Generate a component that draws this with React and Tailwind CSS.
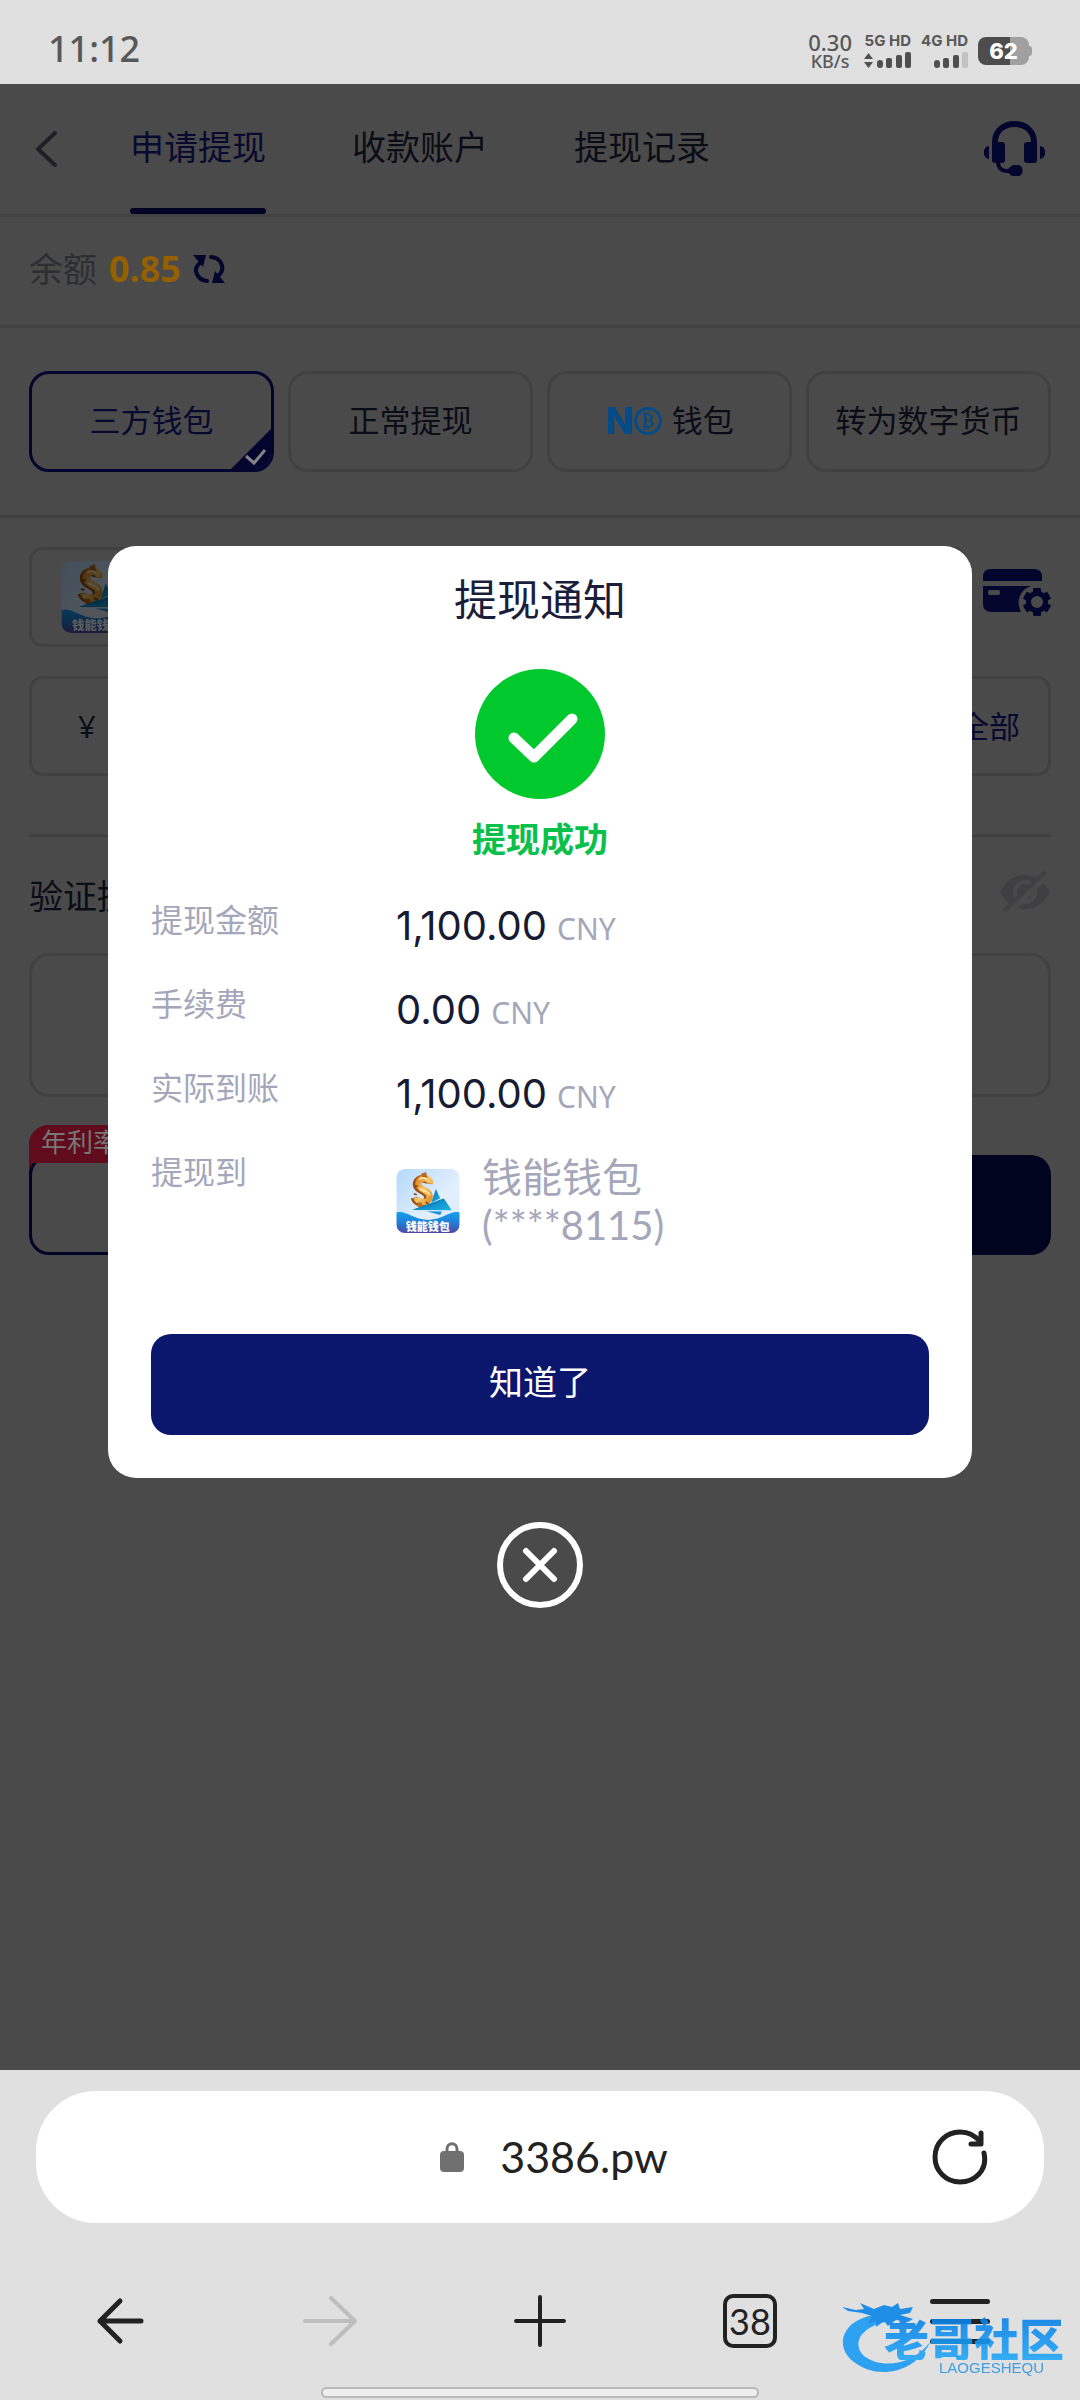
import React from "react";

const CJK = "font-['Noto_Sans','Noto_Sans_CJK_SC',sans-serif]";

function WalletLogo({ className, id }) {
  return (
    <svg viewBox="0 0 189 191" className={className} aria-hidden="true">
      <defs>
        <linearGradient id={id + "-sky"} x1="0" y1="0" x2="1" y2="1">
          <stop offset="0" stopColor="#b4d8fb" />
          <stop offset="0.6" stopColor="#e3effd" />
          <stop offset="1" stopColor="#dbe8fb" />
        </linearGradient>
        <linearGradient id={id + "-sea"} x1="0" y1="0" x2="0" y2="1">
          <stop offset="0" stopColor="#12a0ec" />
          <stop offset="0.55" stopColor="#2379d4" />
          <stop offset="1" stopColor="#5447a4" />
        </linearGradient>
        <linearGradient id={id + "-sail"} x1="0" y1="0" x2="1" y2="1">
          <stop offset="0" stopColor="#0a6fb4" />
          <stop offset="1" stopColor="#1cb2e6" />
        </linearGradient>
        <linearGradient id={id + "-gold"} x1="0" y1="0" x2="1" y2="1">
          <stop offset="0" stopColor="#d98324" />
          <stop offset="0.5" stopColor="#f8c867" />
          <stop offset="1" stopColor="#e0912c" />
        </linearGradient>
        <clipPath id={id + "-clip"}>
          <rect width="189" height="191" rx="26" />
        </clipPath>
      </defs>
      <g clipPath={`url(#${id}-clip)`}>
        <rect width="189" height="191" fill={`url(#${id}-sky)`} />
        <path d="M118 60 L131 88 L104 100 Z" fill={`url(#${id}-sail)`} />
        <path
          d="M96 44 C98 26 60 22 60 46 C60 66 96 62 94 86 C92 108 58 104 54 86"
          fill="none"
          stroke="#9c4d0c"
          strokeWidth="22"
        />
        <path
          d="M100 44 C104 24 66 20 66 44 C66 64 102 61 99 85 C96 105 64 102 60 86"
          fill="none"
          stroke={`url(#${id}-gold)`}
          strokeWidth="19"
        />
        <path d="M76 24 L74 14 L89 9 L92 26 Z M62 100 h14 v14 h-12 z" fill="#b8691b" />
        <path d="M68 32 C74 26 84 26 92 31 M70 58 C84 66 96 66 100 78" fill="none" stroke="#ffe9b5" strokeWidth="5" />
        <path d="M52 74 l9 3 M88 98 l7 6 M56 52 l8 -2" stroke="#8a430a" strokeWidth="5" />
        <path d="M47 122 L142 88 L165 123 Z" fill={`url(#${id}-sail)`} />
        <path d="M90 126 L136 127 L131 137 Z" fill="#1593d4" />
        <path d="M47 122 L142 88 L104 112 Z" fill="#0c86c4" />
        <path d="M0 130 C30 122 45 150 95 152 C145 150 160 122 189 130 V191 H0 Z" fill={`url(#${id}-sea)`} />
      </g>
      <text
        x="94"
        y="184"
        textAnchor="middle"
        fontSize="33"
        fontWeight="900"
        fill="#fff"
        fontFamily="'Noto Sans CJK SC', sans-serif"
      >
        钱能钱包
      </text>
    </svg>
  );
}

function Bars({ light }) {
  return (
    <svg width="34" height="16" viewBox="0 0 34 16" fill="#4f4f4f" aria-hidden="true">
      <rect x="0" y="8" width="6" height="8" rx="3" />
      <rect x="9" y="6" width="6" height="10" rx="2" />
      <rect x="19" y="3" width="6" height="13" rx="2" />
      <rect x="28" y="0" width="6" height="16" rx="2" fill={light ? "#c2c2c2" : "#4f4f4f"} />
    </svg>
  );
}

function StatusBar() {
  return (
    <header className="flex h-[84px] shrink-0 items-center justify-between bg-[#e0e0e0] pl-12 pr-12 pt-[18px] font-['Inter',sans-serif] text-[#585858]">
      <span className="pb-1 font-['Noto_Sans',sans-serif] text-[36px] leading-none font-medium">11:12</span>
      <div className="flex items-center">
        <div className="flex flex-col items-center font-['Noto_Sans',sans-serif] font-medium">
          <span className="text-[22px] leading-5">0.30</span>
          <span className="text-[18px] leading-[18px]">KB/s</span>
        </div>
        <div className="ml-3 flex flex-col items-end gap-1">
          <span className="text-[15px] leading-[14px] font-bold">5G HD</span>
          <div className="flex items-center gap-1">
            <svg width="9" height="15" viewBox="0 0 9 15" fill="#4f4f4f" aria-hidden="true">
              <path d="M4.500 0 L9 6 H0 Z M0 9 H9 L4.500 15 Z" />
            </svg>
            <Bars />
          </div>
        </div>
        <div className="ml-2.5 flex flex-col items-end gap-1">
          <span className="text-[15px] leading-[14px] font-bold">4G HD</span>
          <Bars light />
        </div>
        <div className="ml-2.5 flex items-center">
          <div className="flex h-7 w-[51px] items-center justify-center rounded-lg bg-linear-to-r from-[#4d4d4d] from-62% to-[#a0a0a0] to-62% text-[22px] leading-none font-extrabold text-white">
            62
          </div>
          <div className="h-2.5 w-[3px] rounded-r-sm bg-[#a0a0a0]" />
        </div>
      </div>
    </header>
  );
}

function HeadsetIcon() {
  return (
    <svg width="61" height="56" viewBox="0 0 61 56" fill="#02062c" aria-hidden="true">
      <path d="M11 24 V21 C11 -3 50 -3 50 21 V24" fill="none" stroke="#02062c" strokeWidth="6" />
      <rect x="8" y="21" width="13" height="21" rx="3" />
      <rect x="40" y="21" width="13" height="21" rx="3" />
      <path d="M5 25 C-2 26 -2 37 5 38 Z M56 25 C63 26 63 37 56 38 Z" />
      <path d="M14 40 C14 48 18 50 24 50 H30" fill="none" stroke="#02062c" strokeWidth="4" />
      <path d="M29 44 H34 C40 44 40 55 34 55 H29 C25 55 23 49 25 47 Z" />
    </svg>
  );
}

function CardGearIcon() {
  const teeth = [0, 60, 120, 180, 240, 300];
  return (
    <svg width="68" height="48" viewBox="0 0 68 48" fill="#03062c" aria-hidden="true">
      <path d="M0 12 V8 Q0 0 8 0 H51 Q59 0 59 8 V12 Z" />
      <path d="M0 17 H48 C36 21 33 33 38 43 H9 Q0 43 0 35 Z" />
      <rect x="5" y="21" width="12" height="5" rx="2" fill="#4a4a4a" />
      <circle cx="54" cy="33" r="8.500" fill="none" stroke="#03062c" strokeWidth="5" />
      {teeth.map((a) => (
        <rect key={a} x="50" y="19" width="8" height="6" rx="1" transform={`rotate(${a} 54 33)`} />
      ))}
    </svg>
  );
}

function TopNav() {
  return (
    <nav className="flex h-[133px] items-stretch border-b-[3px] border-[#424242] pl-[29px] pr-[35px] text-[34px] text-[#0a0c16]">
      <button type="button" aria-label="返回" className="flex w-[101px] items-center pl-1">
        <svg width="24" height="36" viewBox="0 0 24 36" fill="none" stroke="#202024" strokeWidth="4" strokeLinecap="round" strokeLinejoin="round">
          <path d="M22 2 L5 18 L22 34" />
        </svg>
      </button>
      <div className="flex gap-[86px]">
        <button type="button" className="relative pb-1 text-[#08092e]">
          申请提现
          <span className="absolute inset-x-0 bottom-0 h-1.5 rounded-full bg-[#020425]" />
        </button>
        <button type="button" className="pb-1">收款账户</button>
        <button type="button" className="pb-1">提现记录</button>
      </div>
      <button type="button" aria-label="客服" className="ml-auto flex items-center">
        <HeadsetIcon />
      </button>
    </nav>
  );
}

function Balance() {
  return (
    <section className="flex h-[111px] items-center border-b-[3px] border-[#424242] px-[29px] pb-1 text-[34px]">
      <span className="text-[#2d2e32]">余额</span>
      <strong className="ml-3 text-[36px] text-[#946000]">0.85</strong>
      <button type="button" aria-label="刷新余额" className="ml-3">
        <svg width="32" height="30" viewBox="0 0 32 30" aria-hidden="true">
          <path d="M7 9 C-1 15 4 26 14 27 M18 3 C29 4 33 15 25 22" fill="none" stroke="#03062c" strokeWidth="4" strokeLinecap="round" />
          <path d="M0 1 H13 L10 13 Z M32 29 H19 L22 17 Z" fill="#03062c" />
        </svg>
      </button>
    </section>
  );
}

function WalletTabs() {
  const plain = "flex h-[101px] items-center justify-center rounded-[20px] border-[3px] border-[#414141] pb-0.5";
  return (
    <section className="grid grid-cols-4 gap-3.5 border-b-[3px] border-[#414141] px-[29px] py-[43px] text-[31px] whitespace-nowrap text-[#0a0c16]">
      <button type="button" className="relative flex h-[101px] items-center justify-center overflow-hidden rounded-[20px] border-[3px] border-[#03052e] pb-0.5 text-[#08092e]">
        三方钱包
        <svg width="44" height="44" viewBox="0 0 44 44" className="absolute right-[-2px] bottom-[-2px]" aria-hidden="true">
          <path d="M44 0 V44 H0 Z" fill="#03052e" />
          <path d="M17 29 L25 36 L36 23" fill="none" stroke="#848488" strokeWidth="3" />
        </svg>
      </button>
      <button type="button" className={plain}>正常提现</button>
      <button type="button" className={plain}>
        <span className="font-['Inter',sans-serif] text-[37px] leading-none font-extrabold text-[#044b87]">N</span>
        <span className="mr-2.5 flex h-7 w-7 items-center justify-center rounded-full border-[3px] border-[#044b87] font-['Liberation_Serif',serif] text-[19px] leading-none font-bold text-[#044b87]">
          ₿
        </span>
        钱包
      </button>
      <button type="button" className={plain}>转为数字货币</button>
    </section>
  );
}

function WithdrawForm() {
  return (
    <section className="px-[29px] pt-[29px] text-[31px] text-[#0a0c16]">
      <div className="flex items-start gap-4">
        <button type="button" aria-label="钱能钱包" className="flex h-[100px] flex-1 items-center rounded-[14px] border-[3px] border-[#414141] px-[29px]">
          <WalletLogo id="field" className="h-[72px] w-[72px] [filter:brightness(0.36)]" />
        </button>
        <button type="button" aria-label="管理账户" className="mt-[22px]">
          <CardGearIcon />
        </button>
      </div>
      <div className="mt-[29px] flex h-[100px] items-center rounded-[14px] border-[3px] border-[#414141] pr-7 pl-[46px]">
        <label htmlFor="amount" className="w-9">¥</label>
        <input id="amount" type="text" inputMode="decimal" className="min-w-0 flex-1 bg-transparent outline-none" />
        <button type="button" className="text-[#08092e]">全部</button>
      </div>
      <hr className="mt-[58px] border-t-[3px] border-[#414141]" />
      <div className="mt-[29px] flex h-[60px] items-center justify-between">
        <label htmlFor="password" className="text-[34px]">验证提</label>
        <button type="button" aria-label="显示密码">
          <svg width="52" height="42" viewBox="0 0 52 42" aria-hidden="true" className="-mt-2">
            <path d="M1 21 C12 -2 40 -2 51 21 C40 44 12 44 1 21 Z" fill="#404042" />
            <circle cx="26" cy="21" r="10" fill="none" stroke="#4a4a4a" strokeWidth="4" />
            <path d="M8 42 L49 2" stroke="#4a4a4a" strokeWidth="8" />
            <path d="M5 40 L46 1" stroke="#404042" strokeWidth="4" />
          </svg>
        </button>
      </div>
      <input id="password" type="password" className="mt-[27px] block h-[144px] w-full rounded-[20px] border-[3px] border-[#414141] bg-transparent px-8 outline-none" />
      <div className="mt-[58px] grid grid-cols-2 gap-3.5">
        <button type="button" aria-label="年利率" className="relative h-[100px] rounded-[20px] border-[3px] border-[#020425]">
          <span className="absolute top-[-33px] left-[-3px] -z-10 h-[60px] w-[140px] rounded-tl-[20px] bg-[#600c1c]" />
          <span className="absolute inset-0 -z-10 rounded-[16px] bg-[#4a4a4a]" />
          <span className="absolute top-[-33px] left-[-3px] h-[38px] w-[140px] rounded-tl-[20px] bg-[#600c1c] pl-3 text-left text-[26px] leading-[34px] text-[#777]">
            年利率
          </span>
        </button>
        <button type="button" aria-label="确认" className="h-[100px] rounded-[20px] bg-[#01041f]" />
      </div>
    </section>
  );
}

const rows = [
  { label: "提现金额", value: "1,100.00" },
  { label: "手续费", value: "0.00" },
  { label: "实际到账", value: "1,100.00" },
];

function Notice() {
  return (
    <div className="absolute inset-0 z-10 flex flex-col items-center justify-center">
      <div role="dialog" aria-labelledby="notice-title" className="w-4/5 rounded-[28px] bg-white px-[43px] pt-6 pb-[43px]">
        <h2 id="notice-title" className="text-center text-[43px] leading-[60px] text-[#1b1e3a]">提现通知</h2>
        <svg viewBox="0 0 130 130" className="mx-auto mt-[39px] h-[130px] w-[130px]" aria-hidden="true">
          <circle cx="65" cy="65" r="65" fill="#00c82d" />
          <path d="M39 69 L59 88 L97 50" fill="none" stroke="#fff" strokeWidth="11" strokeLinecap="round" strokeLinejoin="round" />
        </svg>
        <p className="mt-4 text-center text-[34px] leading-[48px] font-bold text-[#09c04a]">提现成功</p>
        <dl className="mt-[34px]">
          {rows.map((r) => (
            <div key={r.label} className="flex h-[84px] items-start">
              <dt className="w-[245px] text-[32px] leading-[46px] text-[#a4a7b9]">{r.label}</dt>
              <dd className="flex items-baseline gap-2.5 pt-0.5 leading-[54px]">
                <span className="font-['Inter',sans-serif] text-[40px] text-[#171a33]">{r.value}</span>
                <span className="text-[30px] text-[#a4a7b9]">CNY</span>
              </dd>
            </div>
          ))}
          <div className="flex items-start text-[#a4a7b9]">
            <dt className="w-[245px] text-[32px] leading-[46px]">提现到</dt>
            <dd className="flex items-center pt-1">
              <WalletLogo id="dialog" className="h-16 w-16" />
              <span className="ml-[22px] text-[40px] leading-[48px]">
                钱能钱包
                <br />
                <span className="font-['Lato',sans-serif]">(****8115)</span>
              </span>
            </dd>
          </div>
        </dl>
        <button type="button" className="mt-[85px] h-[101px] w-full rounded-[20px] bg-[#0b166d] pb-1 text-[34px] text-white">知道了</button>
      </div>
      <button type="button" aria-label="关闭" className="mt-11">
        <svg width="86" height="86" viewBox="0 0 86 86" fill="none" stroke="#fff" strokeWidth="6" strokeLinecap="round">
          <circle cx="43" cy="43" r="40" />
          <path d="M29 29 L57 57 M57 29 L29 57" />
        </svg>
      </button>
    </div>
  );
}

function Watermark() {
  return (
    <div className="pointer-events-none absolute right-4 bottom-6 flex flex-col items-end opacity-90" aria-hidden="true">
      <svg width="92" height="74" viewBox="0 0 92 74" className="absolute right-[130px] bottom-0">
        <path d="M38 12 C-2 16 -8 46 12 60 C34 78 74 72 88 40 C72 62 40 68 22 54 C8 40 22 24 44 20 Z" fill="#1b9bf3" />
        <path
          d="M0 5 L14 8 L22 7 L18 1 L32 7 L42 3 L50 5 L56 1 L58 7 L71 5 L68 11 L58 13 L71 17 L66 20 L54 18 L46 24 L42 19 L34 25 L34 19 L26 22 L30 14 L20 11 L6 9 Z"
          fill="#0b86e8"
        />
      </svg>
      <span className="relative bg-linear-to-b from-[#0a7fe6] to-[#23a8f8] bg-clip-text font-['Noto_Sans_CJK_SC',sans-serif] text-[45px] leading-[44px] font-black text-transparent">
        老哥社区
      </span>
      <span className="relative mr-5 font-['Liberation_Sans',sans-serif] text-[15px] leading-4 text-[#2f97e0]">LAOGESHEQU</span>
    </div>
  );
}

function BrowserBar() {
  return (
    <footer className="relative shrink-0 bg-[#e0e0e0] pt-[21px] font-['Lato',sans-serif] text-[#222]">
      <div className="relative mx-9 flex h-[132px] items-center justify-center rounded-[60px] bg-white">
        <svg width="24" height="30" viewBox="0 0 24 30" aria-hidden="true">
          <rect y="9" width="24" height="21" rx="4" fill="#707070" />
          <path d="M7 11 V7 C7 0 17 0 17 7 V11" fill="none" stroke="#707070" strokeWidth="3" />
        </svg>
        <span className="mr-[-28px] ml-9 text-[43px]">3386.pw</span>
        <button type="button" aria-label="刷新" className="absolute right-14">
          <svg width="56" height="56" viewBox="0 0 56 56" fill="none" stroke="#222" strokeWidth="5" strokeLinecap="round" strokeLinejoin="round">
            <path d="M52 24 C56 42 42 53 28 53 C14 53 3 42 3 28 C3 14 14 3 28 3 C36 3 43 6 48 13" />
            <path d="M49 4 V15 H39" />
          </svg>
        </button>
      </div>
      <div className="mt-[50px] grid h-24 grid-cols-5 place-items-center px-[15px]">
        <button type="button" aria-label="后退">
          <svg width="48" height="48" viewBox="0 0 48 48" fill="none" stroke="#222" strokeWidth="5" strokeLinecap="round" strokeLinejoin="round">
            <path d="M24 4 L4 24 L24 44 M4 24 H45" />
          </svg>
        </button>
        <button type="button" aria-label="前进">
          <svg width="54" height="50" viewBox="0 0 54 50" fill="none" stroke="#bebebe" strokeWidth="4" strokeLinecap="round" strokeLinejoin="round">
            <path d="M28 2 L52 25 L28 48 M52 25 H2" />
          </svg>
        </button>
        <button type="button" aria-label="新建">
          <svg width="52" height="52" viewBox="0 0 52 52" fill="none" stroke="#222" strokeWidth="4" strokeLinecap="round">
            <path d="M26 2 V50 M2 26 H50" />
          </svg>
        </button>
        <button type="button" aria-label="标签页" className="flex h-[54px] w-[54px] items-center justify-center rounded-[10px] border-4 border-[#222] text-[36px] leading-none">
          38
        </button>
        <button type="button" aria-label="菜单" className="flex w-[60px] flex-col gap-[15px]">
          <span className="h-[5px] rounded-full bg-[#222]" />
          <span className="h-[5px] rounded-full bg-[#222]" />
          <span className="h-[5px] rounded-full bg-[#222]" />
        </button>
      </div>
      <div className="mx-auto mt-[18px] mb-0.5 h-[11px] w-[40.5%] rounded-full border-2 border-[#bababa] bg-[#eee]" />
      <Watermark />
    </footer>
  );
}

export default function App() {
  return (
    <div className={`flex min-h-screen flex-col bg-[#4a4a4a] ${CJK}`}>
      <StatusBar />
      <main className="relative isolate flex-1 bg-[#4a4a4a]">
        <TopNav />
        <Balance />
        <WalletTabs />
        <WithdrawForm />
        <Notice />
      </main>
      <BrowserBar />
    </div>
  );
}
